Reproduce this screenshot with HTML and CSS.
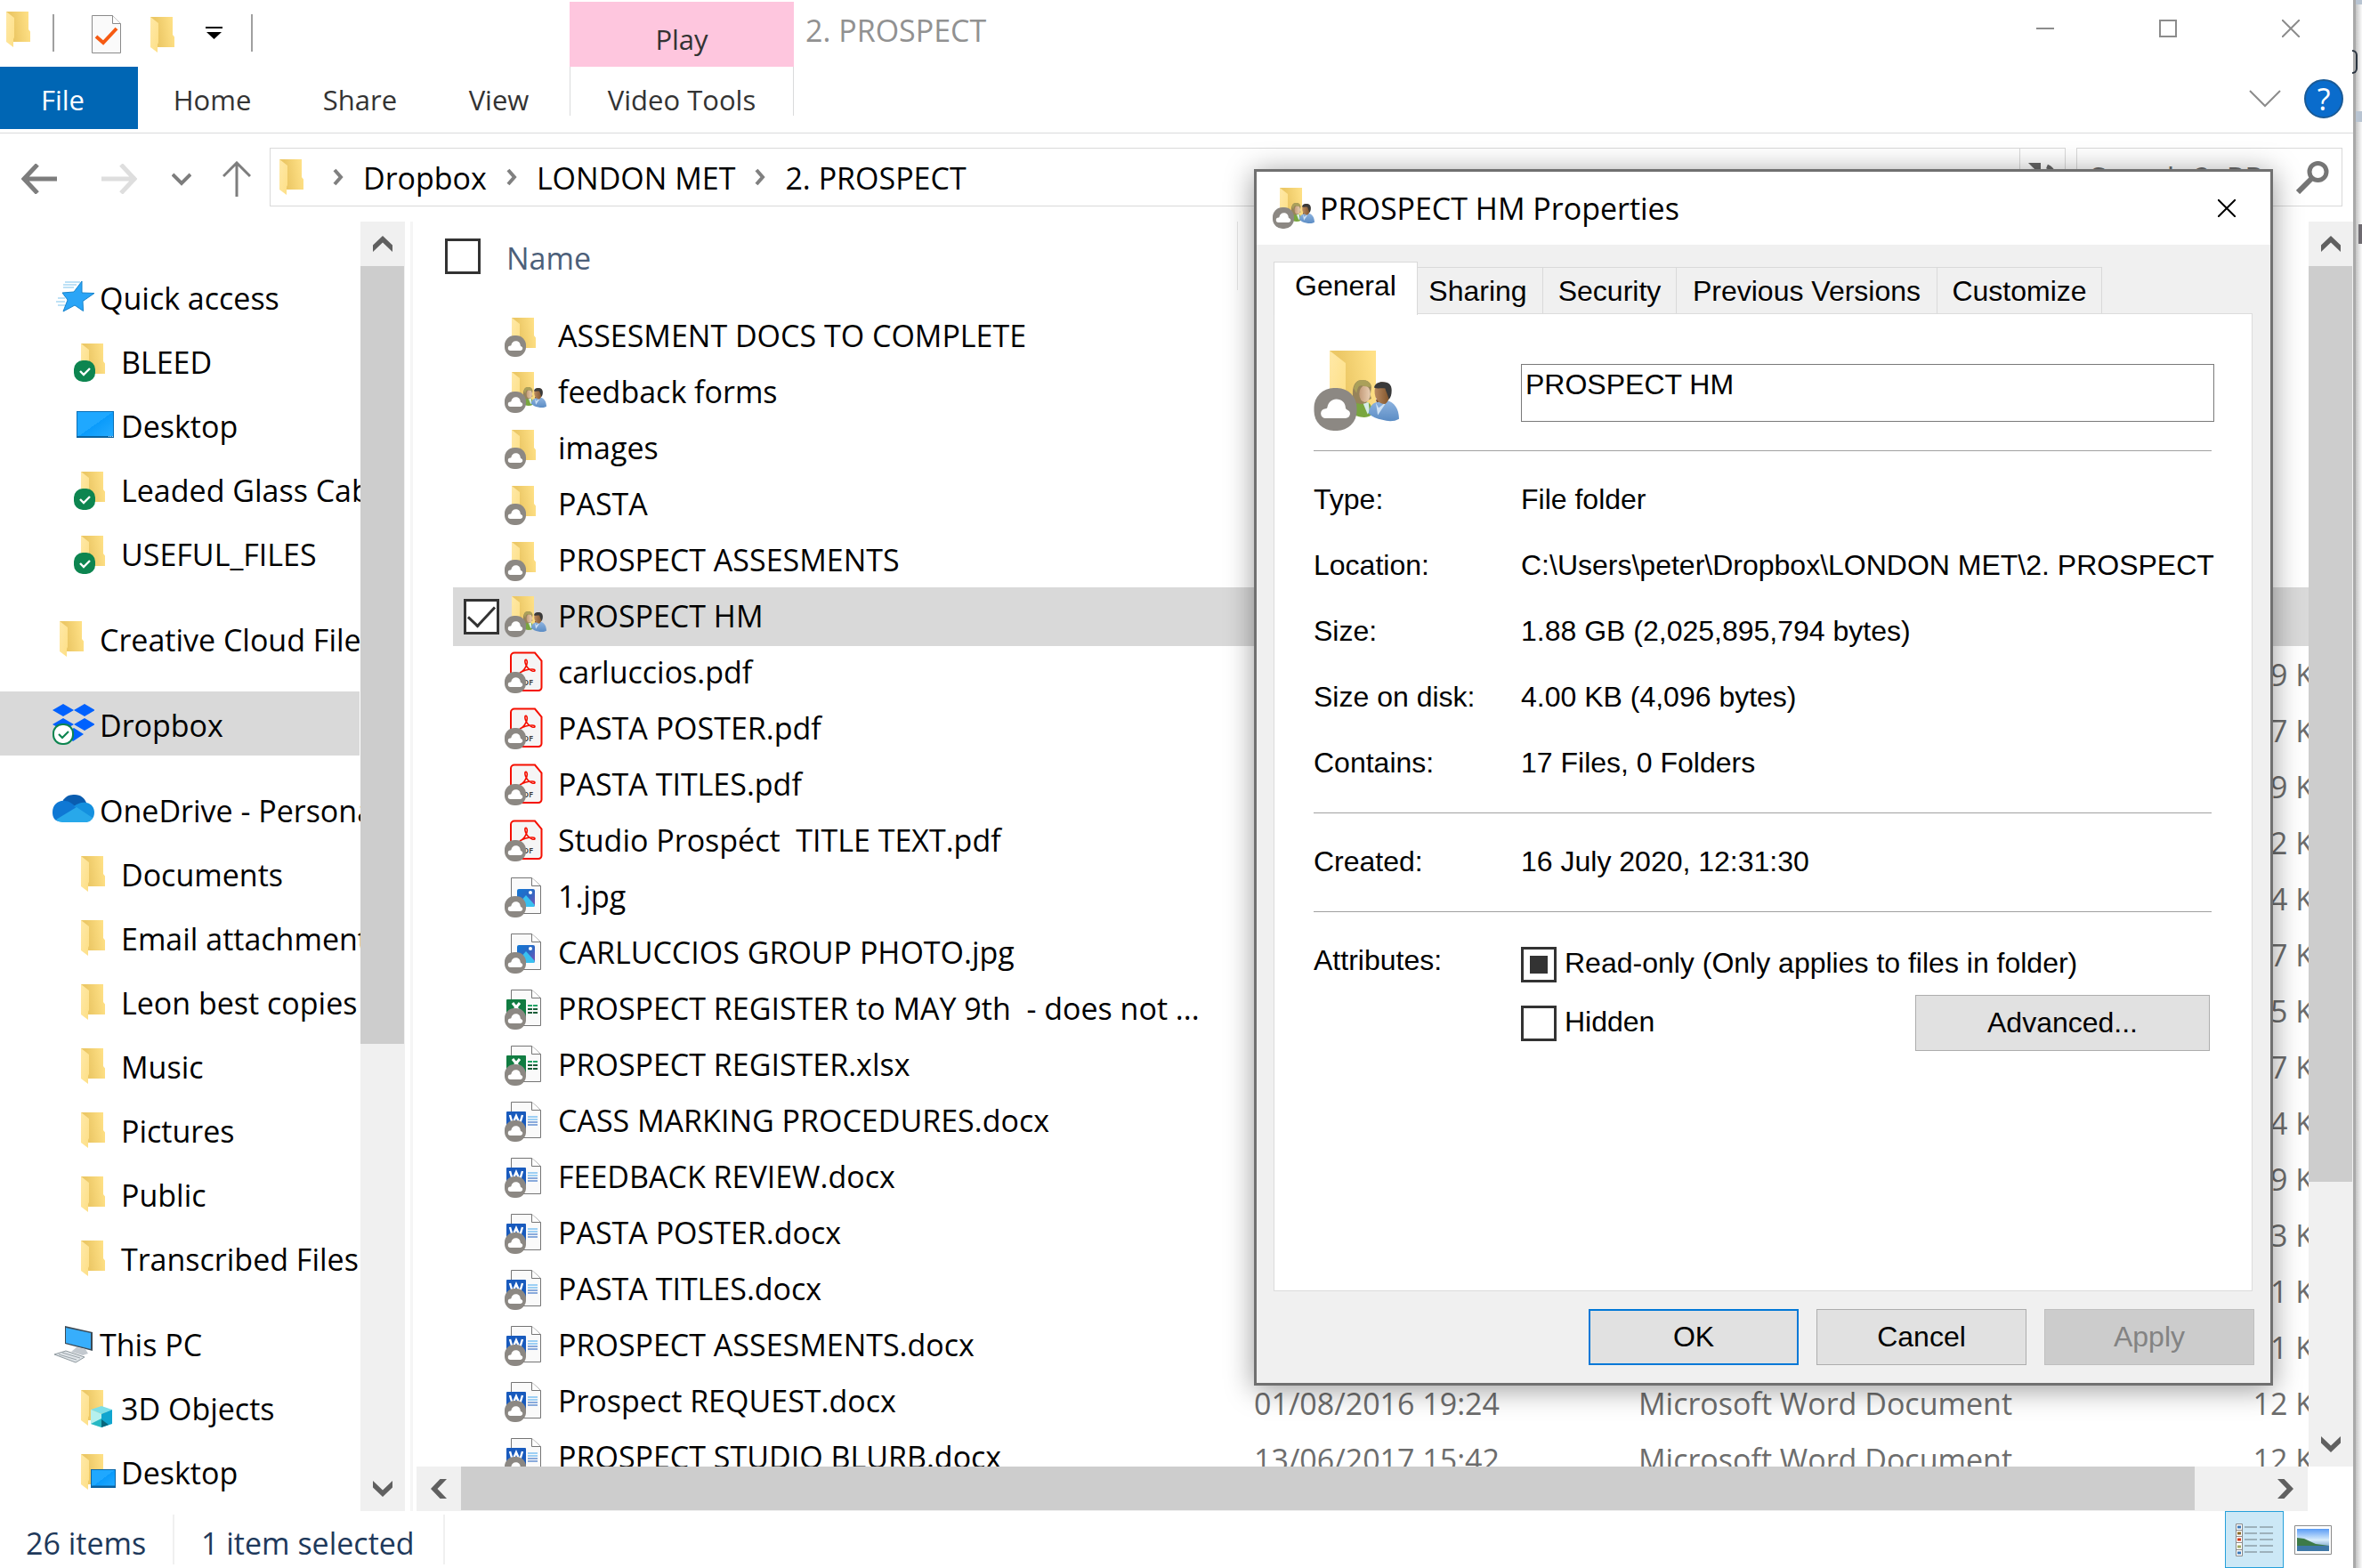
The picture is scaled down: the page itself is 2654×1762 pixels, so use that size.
FILE: index.html
```html
<!DOCTYPE html>
<html lang="en">
<head>
  <meta charset="UTF-8">
  <title>2. PROSPECT</title>
  <link rel="stylesheet" href="styles.css">
</head>
<body>

  <!-- shared icons -->
  <svg class="sprite" aria-hidden="true">
    <defs>
      <linearGradient id="gBack" x1="0" x2="1" y1="0.6" y2="0.4">
        <stop offset="0.3" stop-color="#ecc866"/><stop offset="1" stop-color="#ffe187"/>
      </linearGradient>
      <linearGradient id="gFlap" x1="0" x2="1" y1="0" y2="1">
        <stop offset="0" stop-color="#ffe9a8"/><stop offset="1" stop-color="#fddf86"/>
      </linearGradient>
      <linearGradient id="gScreen" x1="0" x2="1" y1="0" y2="1">
        <stop offset="0" stop-color="#1fa8ff"/><stop offset="0.5" stop-color="#1fa8ff"/>
        <stop offset="0.5" stop-color="#0a9bfb"/><stop offset="1" stop-color="#26abff"/>
      </linearGradient>
      <linearGradient id="gPhoto" x1="0" x2="1" y1="0" y2="1">
        <stop offset="0" stop-color="#1177d4"/><stop offset="0.5" stop-color="#2a68c4"/><stop offset="1" stop-color="#8052b4"/>
      </linearGradient>
      <linearGradient id="gSky" x1="0" x2="0" y1="0" y2="1">
        <stop offset="0" stop-color="#5a9cf5"/><stop offset="0.5" stop-color="#d8ecfb"/><stop offset="1" stop-color="#4a80b0"/>
      </linearGradient>
      <linearGradient id="gBlue" x1="0" x2="0" y1="0" y2="1">
        <stop offset="0" stop-color="#8fb4e0"/><stop offset="1" stop-color="#5b8cc4"/>
      </linearGradient>
      <linearGradient id="gSkin" x1="0" x2="1" y1="0" y2="0">
        <stop offset="0" stop-color="#c39b7a"/><stop offset="1" stop-color="#ead0b4"/>
      </linearGradient>
      <linearGradient id="gBrown" x1="0" x2="1" y1="0" y2="0">
        <stop offset="0" stop-color="#b98a62"/><stop offset="1" stop-color="#7c5026"/>
      </linearGradient>
    </defs>

    <symbol id="folder" viewBox="0 0 28 40">
      <path d="M0 0H25V20L27 22.500V34H8V38L0 33z" fill="url(#gBack)"/>
      <path d="M0 0L9 7V29L8 31V40L0 34z" fill="url(#gFlap)"/>
    </symbol>
    <symbol id="cloud" viewBox="0 0 24 24">
      <rect width="24" height="24" rx="11" fill="#8c8883"/>
      <path d="M6.500 17a2.700 2.700 0 0 1 0-5.400c.6 0 1-.4 1-1C8 8 10 6.200 12.500 6.200c3 0 5.100 2 5.200 4.800 0 .6.400.9.900 1.200 1.200.5 1.800 1.400 1.600 2.600-.2 1.300-1.200 2.200-2.500 2.200z" fill="#fff"/>
    </symbol>
    <symbol id="people" viewBox="0 0 52 46">
      <path d="M4 24l9-1 5 1c4 2 5 6 4 14-4 3-11 3-18 0z" fill="#79a63f"/>
      <path d="M13 25l6-1 1 10-2 3z" fill="#d6ece8"/>
      <path d="M2 18C1 6 5 0 12 0c6 0 10 3 10 8l-1 8 1 4-4 2-2 3C9 27 3 26 2 18z" fill="#97835a"/>
      <ellipse cx="15" cy="15" rx="6" ry="9" fill="url(#gSkin)"/>
      <path d="M3 9C4 3 7 0 12 0c6 0 9 3 10 7-6 1-9-1-11-1-3 0-4 3-5 8z" fill="#aaa05a"/>
      <path d="M27 21l11-1v8l-9 2z" fill="#7a4a22"/>
      <path d="M19 36c1-7 4-11 9-12l11-2c8 2 13 9 13 20-5 3-12 3-18 1-6-1-11-3-15-7z" fill="url(#gBlue)"/>
      <path d="M27 25l3 5 9-7-10 15z" fill="#cfe2f4"/>
      <path d="M26 8c1-4 4-6 8-6 6 0 9 4 9 9s-2 12-6 15c-8 0-13-8-11-18z" fill="url(#gBrown)"/>
      <path d="M25 8c1-4 4-6 9-6 7 0 10 3 10 9 0 5-1 8-3 10-1-5-3-8-4-12-4-1-8 1-12-1z" fill="#3a3a3a"/>
    </symbol>
    <symbol id="folder-cloud" viewBox="0 0 48 48">
      <path d="M9 3H34V23L36 25.500V37H9z" fill="url(#gBack)"/>
      <path d="M9 3L18 10V34L9 37z" fill="url(#gFlap)"/>
      <use href="#cloud" x="1" y="23" width="24" height="24"/>
    </symbol>
    <symbol id="folder-shared" viewBox="0 0 48 48">
      <path d="M9 1H34V22L36 24V34H9z" fill="url(#gBack)"/>
      <path d="M9 1L18 8V34L9 35z" fill="url(#gFlap)"/>
      <use href="#people" x="21" y="18" width="27" height="24"/>
      <use href="#cloud" x="1" y="23" width="24" height="24"/>
    </symbol>
    <symbol id="folder-synced" viewBox="0 0 48 48">
      <path d="M9 5H34V25L36 27.500V39H9z" fill="url(#gBack)"/>
      <path d="M9 5L18 12V34L9 37z" fill="url(#gFlap)"/>
      <rect x="1" y="24" width="24" height="24" rx="10" fill="#0d8550"/>
      <path d="M8 36l4 4 7-7" fill="none" stroke="#fff" stroke-width="2.400"/>
    </symbol>
    <symbol id="folder-plain" viewBox="0 0 48 48">
      <use href="#folder" x="9" y="5" width="28" height="40"/>
    </symbol>
    <symbol id="folder-cube" viewBox="0 0 48 48">
      <use href="#folder" x="9" y="5" width="28" height="40"/>
      <path d="M20 27l12-4 12 4-12 5z" fill="#7ddfe8"/>
      <path d="M20 27l12 5v15l-12-4z" fill="#b5f0ee"/>
      <path d="M20 43l12-6v10z" fill="#27b8c4"/>
      <path d="M44 27l-12 5v15l12-4z" fill="#10a5cf"/>
      <path d="M32 38l8 6-8 3z" fill="#08677c"/>
    </symbol>
    <symbol id="folder-desktop" viewBox="0 0 48 48">
      <use href="#folder" x="9" y="5" width="28" height="40"/>
      <rect x="20.500" y="22.500" width="27" height="20" fill="url(#gScreen)" stroke="#0a66a8"/>
      <path d="M21 41.500h27" stroke="#0c5f9c" stroke-width="2"/>
    </symbol>
    <symbol id="desktop" viewBox="0 0 48 48">
      <rect x="4.500" y="9.500" width="41" height="29" fill="url(#gScreen)" stroke="#0a70b8"/>
      <path d="M4 38h42" stroke="#0b629e" stroke-width="2"/>
      <path d="M40 37.500h5" stroke="#cfeaff" stroke-dasharray="1 1"/>
    </symbol>
    <symbol id="star" viewBox="0 0 48 48">
      <path d="M15 8h17M13 11h15M13 14h12M7 26h8M5 30h10M7 34h8" stroke="#7cc3ec" stroke-width="1"/>
      <path d="M34 7v13l14 .5-13 9 .5 11L26 34l-13 7 5-13-6-8 13-1z" fill="#2aa5f7" stroke="#1784cc"/>
    </symbol>
    <symbol id="dropbox" viewBox="0 0 48 48">
      <path d="M13 2l12 7-12 7L1 9zM37 2l12 7-12 7-12-7zM13 18l12 7-12 7L1 25zM37 18l12 7-12 7-12-7zM25 29l11 7-12 8-10-8z" fill="#0061fe"/>
      <rect x="2" y="25" width="22" height="22" rx="10" fill="#fff" stroke="#0d8550" stroke-width="2"/>
      <path d="M8 36l4 4 7-7" fill="none" stroke="#0d8550" stroke-width="2.200"/>
    </symbol>
    <symbol id="onedrive" viewBox="0 0 48 48">
      <path d="M12 16C16 8 22 8 26 8c7 0 11 4 13 9l-12 8z" fill="#0a5db0"/>
      <path d="M1 28c0-9 7-14 14-13 5 0 8 3 14 8L8 38C3 37 1 33 1 28z" fill="#0f78d4"/>
      <path d="M25 21c4-3 9-5 14-4 6 1 9 6 9 11 0 3-1 6-3 8z" fill="#1490df"/>
      <path d="M5 36l23-14 18 12c-1 3-4 5-8 5H12c-3 0-5-1-7-3z" fill="#28a8ea"/>
    </symbol>
    <symbol id="pc" viewBox="0 0 48 48">
      <path d="M15 5l31 7v21l-31-8z" fill="#3c4a55"/>
      <path d="M16 7l28 6v18L16 24z" fill="#37aefc"/>
      <path d="M28 29l10 2 3 5-6 2-13-4z" fill="#c3c9cf"/>
      <path d="M3 37l13-4 21 7-10 6z" fill="#dfe4e8" stroke="#8f999f"/>
      <path d="M8 37l20 6M12 35l20 6" stroke="#9aa3a9"/>
    </symbol>
    <symbol id="sheet" viewBox="0 0 48 48">
      <path d="M8.500 2.500h23l10 9v31h-33z" fill="#fafafa" stroke="#757575"/>
      <path d="M31.500 2.500v9h10" fill="#fff" stroke="#757575"/>
    </symbol>
    <symbol id="pdf" viewBox="0 0 48 48">
      <path d="M12 1.500h23l7.500 9v30a3.500 3.500 0 0 1-3.500 3.500H12a4 4 0 0 1-4-4V5.500a4 4 0 0 1 4-4z" fill="#f5f5f5" stroke="#f50f00" stroke-width="2"/>
      <path d="M18 24c6-2 10-12 7.500-14.500C22 8 24 19 32 22c4 1 4-2 0-2-5 0-9 1-14 4z" fill="none" stroke="#f50f00" stroke-width="1.600"/>
      <text x="16" y="38" font-family="Open Sans, sans-serif" font-size="9" font-weight="600" fill="#333">PDF</text>
      <use href="#cloud" x="1" y="23" width="24" height="24"/>
    </symbol>
    <symbol id="jpg" viewBox="0 0 48 48">
      <use href="#sheet"/>
      <rect x="15" y="15" width="20" height="20" rx="2" fill="url(#gPhoto)"/>
      <path d="M15 33l10-11 10 11-1 2H16z" fill="#38c0f0"/>
      <circle cx="30" cy="19" r="2" fill="#fff"/>
      <use href="#cloud" x="1" y="23" width="24" height="24"/>
    </symbol>
    <symbol id="xlsx" viewBox="0 0 48 48">
      <use href="#sheet"/>
      <rect x="3" y="13" width="22" height="23" rx="1" fill="#107c41"/>
      <path d="M10 17l8 10M18 17l-8 10" stroke="#fff" stroke-width="3"/>
      <path d="M27 20h5M33 20h5" stroke="#21a366" stroke-width="2"/>
      <path d="M27 24h5M33 24h5M27 28h5M33 28h5" stroke="#185c37" stroke-width="2"/>
      <use href="#cloud" x="1" y="23" width="24" height="24"/>
    </symbol>
    <symbol id="docx" viewBox="0 0 48 48">
      <use href="#sheet"/>
      <rect x="3" y="13" width="22" height="23" rx="1" fill="#185abd"/>
      <path d="M7 17l3 10 4-9 4 9 3-10" fill="none" stroke="#fff" stroke-width="2.400"/>
      <path d="M27 19h11M27 22h11" stroke="#41a5ee"/>
      <path d="M27 25h11M27 28h11" stroke="#185abd"/>
      <use href="#cloud" x="1" y="23" width="24" height="24"/>
    </symbol>
    <symbol id="sb-up" viewBox="0 0 22 18"><path d="M0 10.500L11 0l11 10.500V18L11 7.500 0 18z" fill="#606060"/></symbol>
    <symbol id="sb-down" viewBox="0 0 22 18"><path d="M0 7.500L11 18 22 7.500V0L11 10.500 0 0z" fill="#606060"/></symbol>
    <symbol id="sb-left" viewBox="0 0 18 22"><path d="M10.500 0L0 11l10.500 11H18L7.500 11 18 0z" fill="#606060"/></symbol>
    <symbol id="sb-right" viewBox="0 0 18 22"><path d="M7.500 0L18 11 7.500 22H0l10.500-11L0 0z" fill="#606060"/></symbol>
    <symbol id="crumb" viewBox="0 0 12 20"><path d="M2 2l7 8-7 8" fill="none" stroke="#808080" stroke-width="4"/></symbol>
    <symbol id="close" viewBox="0 0 20 20"><path d="M0 0l20 20M20 0L0 20" fill="none" stroke="currentColor" stroke-width="2"/></symbol>
  </svg>

  <div class="window">

    <header class="titlebar">
      <div class="quickbar">
        <svg class="folder"><use href="#folder"/></svg>
        <span class="bar"></span>
        <button class="plain prop" aria-label="Properties">
          <svg width="33" height="43" viewBox="0 0 33 43">
            <path d="M.5.500h23l9 9v33H.5z" fill="#fafafa" stroke="#8a8a8a"/>
            <path d="M23.500.500v9h9" fill="#fff" stroke="#8a8a8a"/>
            <path d="M5 24l8 7L28 15" fill="none" stroke="#f65a12" stroke-width="4"/>
          </svg>
        </button>
        <button class="plain newfolder" aria-label="New folder"><svg class="folder"><use href="#folder"/></svg></button>
        <button class="plain more" aria-label="Customize Quick Access Toolbar">
          <svg width="19" height="14" viewBox="0 0 19 14"><path d="M0 0h19v2H0zM1 6h17l-8.500 8z" fill="#000"/></svg>
        </button>
        <span class="bar"></span>
      </div>
      <div class="context-tab">Play</div>
      <div class="window-title">2. PROSPECT</div>
      <div class="window-buttons">
        <button class="plain" aria-label="Minimize"><svg width="20" height="20"><path d="M0 10h20" stroke="#8c8c8c" stroke-width="2"/></svg></button>
        <button class="plain" aria-label="Maximize"><svg width="20" height="20"><path d="M1 1h18v18H1z" fill="none" stroke="#8c8c8c" stroke-width="2"/></svg></button>
        <button class="plain" aria-label="Close"><svg width="20" height="20"><use href="#close"/></svg></button>
      </div>
    </header>

    <nav class="ribbon">
      <button class="ribbon-tab file">File</button>
      <button class="ribbon-tab home">Home</button>
      <button class="ribbon-tab share">Share</button>
      <button class="ribbon-tab view">View</button>
      <button class="ribbon-tab video">Video Tools</button>
      <div class="ribbon-end">
        <button class="plain" aria-label="Expand the Ribbon"><svg width="36" height="20"><path d="M1 1l17 17L35 1" fill="none" stroke="#8c8c8c" stroke-width="2"/></svg></button>
        <button class="help" aria-label="Help">?</button>
      </div>
    </nav>

    <div class="navbar">
      <div class="arrows">
        <button class="plain" aria-label="Back"><svg width="40" height="34"><path d="M40 17H4M18 1L3 17l15 16" fill="none" stroke="#7d7d7d" stroke-width="5"/></svg></button>
        <button class="plain fwd" aria-label="Forward"><svg width="40" height="34"><path d="M0 17h36M22 1l15 16-15 16" fill="none" stroke="#dedede" stroke-width="5"/></svg></button>
        <button class="plain recent" aria-label="Recent locations"><svg width="22" height="15"><path d="M1 2l10 10L21 2" fill="none" stroke="#7d7d7d" stroke-width="4"/></svg></button>
        <button class="plain up" aria-label="Up"><svg width="32" height="40"><path d="M16 40V3M1 17L16 2l15 15" fill="none" stroke="#7d7d7d" stroke-width="3"/></svg></button>
      </div>
      <div class="address">
        <svg class="folder"><use href="#folder"/></svg>
        <svg class="crumb"><use href="#crumb"/></svg>
        <a href="#">Dropbox</a>
        <svg class="crumb"><use href="#crumb"/></svg>
        <a href="#">LONDON MET</a>
        <svg class="crumb"><use href="#crumb"/></svg>
        <a href="#">2. PROSPECT</a>
        <div class="address-end">
          <button class="plain drop" aria-label="Previous locations"><svg width="26" height="15"><path d="M1 1l12 12L25 1" fill="none" stroke="#606060" stroke-width="3"/></svg></button>
          <button class="plain refresh" aria-label="Refresh"><svg width="32" height="32" viewBox="0 0 32 32"><path d="M6 8a13 13 0 1 0 15-4" fill="none" stroke="#666" stroke-width="5"/><path d="M0 0h14v14z" fill="#666"/></svg></button>
        </div>
      </div>
      <div class="search">
        <input type="search" placeholder="Search 2. PR..." aria-label="Search 2. PROSPECT">
        <svg width="37" height="37" viewBox="0 0 37 37"><circle cx="24.500" cy="12" r="9.500" fill="none" stroke="#757575" stroke-width="5"/><path d="M18 19L2 35" stroke="#757575" stroke-width="6"/></svg>
      </div>
    </div>

    <div class="panes">
      <aside class="sidebar">
        <ul class="tree">
          <li><svg><use href="#star"/></svg><a href="#">Quick access</a></li>
          <li class="sub"><svg><use href="#folder-synced"/></svg><a href="#">BLEED</a></li>
          <li class="sub"><svg><use href="#desktop"/></svg><a href="#">Desktop</a></li>
          <li class="sub"><svg><use href="#folder-synced"/></svg><a href="#">Leaded Glass Cabinets</a></li>
          <li class="sub"><svg><use href="#folder-synced"/></svg><a href="#">USEFUL_FILES</a></li>
          <li class="group"><svg><use href="#folder-plain"/></svg><a href="#">Creative Cloud Files</a></li>
          <li class="group current"><svg><use href="#dropbox"/></svg><a href="#">Dropbox</a></li>
          <li class="group"><svg><use href="#onedrive"/></svg><a href="#">OneDrive - Personal</a></li>
          <li class="sub"><svg><use href="#folder-plain"/></svg><a href="#">Documents</a></li>
          <li class="sub"><svg><use href="#folder-plain"/></svg><a href="#">Email attachments</a></li>
          <li class="sub"><svg><use href="#folder-plain"/></svg><a href="#">Leon best copies</a></li>
          <li class="sub"><svg><use href="#folder-plain"/></svg><a href="#">Music</a></li>
          <li class="sub"><svg><use href="#folder-plain"/></svg><a href="#">Pictures</a></li>
          <li class="sub"><svg><use href="#folder-plain"/></svg><a href="#">Public</a></li>
          <li class="sub"><svg><use href="#folder-plain"/></svg><a href="#">Transcribed Files</a></li>
          <li class="group"><svg><use href="#pc"/></svg><a href="#">This PC</a></li>
          <li class="sub"><svg><use href="#folder-cube"/></svg><a href="#">3D Objects</a></li>
          <li class="sub"><svg><use href="#folder-desktop"/></svg><a href="#">Desktop</a></li>
        </ul>
        <div class="vscroll">
          <svg class="v-arrow"><use href="#sb-up"/></svg>
          <div class="track"><div class="thumb side-thumb"></div></div>
          <svg class="v-arrow"><use href="#sb-down"/></svg>
        </div>
      </aside>

      <main class="content">
        <div class="list-area">
          <div class="list">
            <table class="files">
              <colgroup><col class="c-name"><col class="c-date"><col class="c-type"><col class="c-size"></colgroup>
              <thead>
                <tr>
                  <th><div class="head"><input type="checkbox" class="check" aria-label="Select all"><span>Name</span></div></th>
                  <th></th><th></th><th></th>
                </tr>
              </thead>
              <tbody>
                <tr><td><div class="name"><svg><use href="#folder-cloud"/></svg>ASSESMENT DOCS TO COMPLETE</div></td><td></td><td></td><td></td></tr>
                <tr><td><div class="name"><svg><use href="#folder-shared"/></svg>feedback forms</div></td><td></td><td></td><td></td></tr>
                <tr><td><div class="name"><svg><use href="#folder-cloud"/></svg>images</div></td><td></td><td></td><td></td></tr>
                <tr><td><div class="name"><svg><use href="#folder-cloud"/></svg>PASTA</div></td><td></td><td></td><td></td></tr>
                <tr><td><div class="name"><svg><use href="#folder-cloud"/></svg>PROSPECT ASSESMENTS</div></td><td></td><td></td><td></td></tr>
                <tr class="selected"><td><div class="name"><input type="checkbox" class="check" checked aria-label="PROSPECT HM"><svg><use href="#folder-shared"/></svg>PROSPECT HM</div></td><td></td><td></td><td></td></tr>
                <tr><td><div class="name"><svg><use href="#pdf"/></svg>carluccios.pdf</div></td><td></td><td></td><td>9 KB</td></tr>
                <tr><td><div class="name"><svg><use href="#pdf"/></svg>PASTA POSTER.pdf</div></td><td></td><td></td><td>7 KB</td></tr>
                <tr><td><div class="name"><svg><use href="#pdf"/></svg>PASTA TITLES.pdf</div></td><td></td><td></td><td>9 KB</td></tr>
                <tr><td><div class="name"><svg><use href="#pdf"/></svg>Studio Prospéct&nbsp; TITLE TEXT.pdf</div></td><td></td><td></td><td>2 KB</td></tr>
                <tr><td><div class="name"><svg><use href="#jpg"/></svg>1.jpg</div></td><td></td><td></td><td>4 KB</td></tr>
                <tr><td><div class="name"><svg><use href="#jpg"/></svg>CARLUCCIOS GROUP PHOTO.jpg</div></td><td></td><td></td><td>7 KB</td></tr>
                <tr><td><div class="name"><svg><use href="#xlsx"/></svg>PROSPECT REGISTER to MAY 9th&nbsp; - does not ...</div></td><td></td><td></td><td>5 KB</td></tr>
                <tr><td><div class="name"><svg><use href="#xlsx"/></svg>PROSPECT REGISTER.xlsx</div></td><td></td><td></td><td>7 KB</td></tr>
                <tr><td><div class="name"><svg><use href="#docx"/></svg>CASS MARKING PROCEDURES.docx</div></td><td></td><td></td><td>4 KB</td></tr>
                <tr><td><div class="name"><svg><use href="#docx"/></svg>FEEDBACK REVIEW.docx</div></td><td></td><td></td><td>9 KB</td></tr>
                <tr><td><div class="name"><svg><use href="#docx"/></svg>PASTA POSTER.docx</div></td><td></td><td></td><td>3 KB</td></tr>
                <tr><td><div class="name"><svg><use href="#docx"/></svg>PASTA TITLES.docx</div></td><td></td><td></td><td>1 KB</td></tr>
                <tr><td><div class="name"><svg><use href="#docx"/></svg>PROSPECT ASSESMENTS.docx</div></td><td></td><td></td><td>1 KB</td></tr>
                <tr><td><div class="name"><svg><use href="#docx"/></svg>Prospect REQUEST.docx</div></td><td>01/08/2016 19:24</td><td>Microsoft Word Document</td><td>12 KB</td></tr>
                <tr><td><div class="name"><svg><use href="#docx"/></svg>PROSPECT STUDIO BLURB.docx</div></td><td>13/06/2017 15:42</td><td>Microsoft Word Document</td><td>12 KB</td></tr>
              </tbody>
            </table>
          </div>
          <div class="vscroll">
            <svg class="v-arrow"><use href="#sb-up"/></svg>
            <div class="track"><div class="thumb main-thumb"></div></div>
            <svg class="v-arrow"><use href="#sb-down"/></svg>
          </div>
        </div>
        <div class="hscroll">
          <svg class="h-arrow"><use href="#sb-left"/></svg>
          <div class="track"><div class="thumb wide-thumb"></div></div>
          <svg class="h-arrow"><use href="#sb-right"/></svg>
        </div>
      </main>
    </div>

    <footer class="status">
      <span class="count">26 items</span>
      <span class="chosen">1 item selected</span>
      <div class="views">
        <button class="view-btn on" aria-label="Details">
          <svg width="42" height="37" viewBox="0 0 42 37">
            <path d="M.5.500h7v36h-7zM.5 7.500h7M.5 14.500h7M.5 21.500h7M.5 29.500h7" fill="#fff" stroke="#8a8a8a"/>
            <path d="M2 4h4" stroke="#3a78b8" stroke-width="3"/><path d="M2 11h4" stroke="#8a6a28" stroke-width="3"/>
            <path d="M2 18h4" stroke="#d03818" stroke-width="3"/><path d="M2 26h4" stroke="#a0a860" stroke-width="3"/><path d="M2 33h4" stroke="#3a78b8" stroke-width="3"/>
            <path d="M10 4h14M27 4h15M10 11h14M27 11h15M10 18h14M27 18h15M10 25h14M27 25h15M10 32h14M27 32h15" stroke="#6f7b80"/>
          </svg>
        </button>
        <button class="view-btn" aria-label="Large icons">
          <svg width="42" height="33" viewBox="0 0 42 33">
            <path d="M.5.500h41v32H.5z" fill="#fff" stroke="#8a8a8a"/>
            <path d="M3 4h36v25H3z" fill="url(#gSky)"/>
            <path d="M3 14l8 1 13 6 15 2H3z" fill="#3d7a48"/>
            <path d="M3 23h36v6H3z" fill="#3f78a8"/>
          </svg>
        </button>
      </div>
    </footer>
  </div>

  <!-- sliver of the page behind the window -->
  <div class="behind"><span class="patch"></span><span class="curve"></span><span class="patch low"></span><span class="mark"></span></div>

  <section class="dialog" role="dialog" aria-labelledby="dlg-title">
    <header class="dialog-title">
      <svg class="small-icon"><use href="#folder-shared"/></svg>
      <h1 id="dlg-title">PROSPECT HM Properties</h1>
      <button class="plain dialog-close" aria-label="Close"><svg width="20" height="20"><use href="#close"/></svg></button>
    </header>

    <div class="tabs" role="tablist">
      <button class="tab active" role="tab">General</button>
      <button class="tab sharing" role="tab">Sharing</button>
      <button class="tab security" role="tab">Security</button>
      <button class="tab versions" role="tab">Previous Versions</button>
      <button class="tab customize" role="tab">Customize</button>
    </div>

    <div class="panel">
      <div class="identity">
        <svg class="big-icon" viewBox="0 0 96 92">
          <path d="M18 1H70V70H18z" fill="url(#gBack)"/>
          <path d="M18 1L36 15V60H18z" fill="url(#gFlap)"/>
          <use href="#people" x="42" y="34" width="54" height="48"/>
          <use href="#cloud" x="0" y="43" width="49" height="48"/>
        </svg>
        <input type="text" class="folder-name" value="PROSPECT HM" aria-label="Folder name">
      </div>

      <dl class="facts">
        <dt>Type:</dt><dd>File folder</dd>
        <dt>Location:</dt><dd>C:\Users\peter\Dropbox\LONDON MET\2. PROSPECT</dd>
        <dt>Size:</dt><dd>1.88 GB (2,025,895,794 bytes)</dd>
        <dt>Size on disk:</dt><dd>4.00 KB (4,096 bytes)</dd>
        <dt>Contains:</dt><dd>17 Files, 0 Folders</dd>
      </dl>
      <dl class="facts">
        <dt>Created:</dt><dd>16 July 2020, 12:31:30</dd>
      </dl>
      <div class="facts attributes">
        <span class="attr-label">Attributes:</span>
        <div class="attr-list">
          <label><input type="checkbox" class="check mixed">Read-only (Only applies to files in folder)</label>
          <div class="attr-row">
            <label><input type="checkbox" class="check">Hidden</label>
            <button class="btn advanced">Advanced...</button>
          </div>
        </div>
      </div>
    </div>

    <div class="dialog-buttons">
      <button class="btn default">OK</button>
      <button class="btn">Cancel</button>
      <button class="btn" disabled>Apply</button>
    </div>
  </section>

</body>
</html>
```
FILE: styles.css
```css
* { box-sizing: border-box; }

body {
  margin: 0;
  height: 100vh;
  display: flex;
  position: relative;
  overflow: hidden;
  background: #fff;
  color: #000;
  font-family: "Open Sans", "Noto Sans", sans-serif;
  font-size: 34px;
  line-height: 48px;
}
button, input { font: inherit; color: inherit; }
button { padding: 0; border: 0; background: none; }
a { color: inherit; text-decoration: none; }
svg { display: block; flex: none; }
ul, dl, dd, h1 { margin: 0; padding: 0; }
.sprite { position: absolute; width: 0; height: 0; }
.plain { display: flex; align-items: center; justify-content: center; }
.folder { width: 28px; height: 40px; }

.window {
  flex: 1;
  min-width: 0;
  display: flex;
  flex-direction: column;
  border-right: 3px solid #a9a9a9;
}

/* title bar */
.titlebar { display: flex; height: 75px; }
.quickbar {
  width: 640px;
  padding: 13px 0 0 7px;
  display: flex;
  align-items: flex-start;
}
.bar { width: 2px; height: 42px; margin: 3px 0 0 24px; background: #a0a0a0; }
.prop { margin: 4px 0 0 42px; }
.newfolder { margin: 6px 0 0 33px; }
.more { margin: 17px 8px 0 34px; }
.context-tab {
  width: 252px;
  margin-top: 2px;
  padding-top: 18px;
  text-align: center;
  background: #fec6de;
  color: #333;
  font-size: 31px;
}
.window-title { padding: 10px 0 0 13px; color: #919191; }
.window-buttons {
  margin-left: auto;
  padding: 22px 60px 0 0;
  display: flex;
  align-items: flex-start;
  gap: 118px;
  color: #8c8c8c;
}

/* ribbon */
.ribbon { display: flex; height: 75px; border-bottom: 1px solid #dadbdc; font-size: 31px; }
.ribbon-tab { height: 70px; padding-top: 4px; color: #333; }
.file { width: 155px; padding-right: 14px; background: #0066b4; color: #fff; }
.home { width: 167px; }
.share { width: 165px; }
.view { width: 153px; padding-right: 6px; }
.video { width: 252px; height: 55px; padding-top: 13px; border: solid #dadbdc; border-width: 0 1px; }
.ribbon-end {
  margin-left: auto;
  padding: 14px 11px 0 0;
  display: flex;
  align-items: flex-start;
  gap: 26px;
}
.ribbon-end .plain { height: 44px; }
.help {
  width: 44px;
  height: 44px;
  line-height: 40px;
  border: 2px solid #1a5a96;
  border-radius: 50%;
  background: #0a6ccc;
  color: #fff;
  font-size: 34px;
}

/* address row */
.navbar { display: flex; height: 99px; padding: 16px 12px 17px 0; }
.arrows { width: 303px; padding-left: 24px; display: flex; align-items: center; margin-top: 4px; }
.fwd { margin-left: 50px; }
.recent { margin-left: 39px; }
.up { margin-left: 35px; }
.address {
  flex: 1;
  display: flex;
  align-items: center;
  padding-left: 10px;
  border: 1px solid #d9d9d9;
}
.address a { margin: 0 22px; padding-top: 2px; }
.crumb { width: 12px; height: 20px; }
.address .folder + .crumb { margin-left: 32px; }
.address-end { margin-left: auto; height: 100%; display: flex; }
.drop { width: 50px; }
.refresh { width: 51px; border-left: 1px solid #d9d9d9; }
.search {
  width: 299px;
  margin-left: 12px;
  padding: 0 14px 0 14px;
  display: flex;
  align-items: center;
  border: 1px solid #d9d9d9;
}
.search input {
  flex: 1;
  min-width: 0;
  padding: 2px 0 0;
  border: 0;
  outline: 0;
  background: none;
}
.search input::placeholder { color: #6d6d6d; opacity: 1; }
.search svg { margin-left: 4px; }

/* navigation tree */
.panes { flex: 1; min-height: 0; display: flex; }
.sidebar { width: 464px; display: flex; border-right: 3px solid #f5f5f5; }
.sidebar .vscroll { margin-right: 6px; }
.tree { flex: 1; min-width: 0; padding-top: 48px; list-style: none; overflow: hidden; }
.tree li {
  height: 72px;
  padding-left: 58px;
  display: flex;
  align-items: center;
  gap: 6px;
  white-space: nowrap;
}
.tree svg { width: 48px; height: 48px; overflow: visible; }
.tree a { padding-top: 4px; }
.tree .sub { padding-left: 82px; }
.tree .group { margin-top: 24px; }
.tree .current { background: #d9d9d9; margin-right: 1px; }

/* scroll bars */
.vscroll { width: 50px; display: flex; flex-direction: column; align-items: center; background: #f0f0f0; }
.v-arrow { width: 22px; height: 18px; margin: 16px 0; }
.vscroll .track { flex: 1; width: 100%; padding-right: 1px; }
.thumb { background: #cdcdcd; }
.side-thumb { height: 64.8%; }
.main-thumb { height: 79.2%; }
.hscroll { height: 50px; margin: 0 51px 0 4px; display: flex; align-items: center; background: #f0f0f0; }
.hscroll .track { flex: 1; height: 100%; padding-bottom: 1px; }
.h-arrow { width: 18px; height: 22px; margin: 0 16px; }
.wide-thumb { width: 96.2%; height: 100%; }

/* file list */
.content { flex: 1; min-width: 0; display: flex; flex-direction: column; }
.list-area { flex: 1; min-height: 0; display: flex; }
.list { flex: 1; min-width: 0; overflow: hidden; padding-left: 45px; }
.files {
  width: calc(100% + 28px);
  table-layout: fixed;
  border-collapse: collapse;
  white-space: nowrap;
}
.c-name { width: 900px; }
.c-date { width: 432px; }
.c-size { width: 200px; }
.files th { height: 97px; padding: 0; vertical-align: top; font-weight: normal; text-align: left; }
.files td { height: 63px; padding: 4px 0 0; color: #6d6d6d; }
.files td:first-child { padding: 0; color: #000; }
.files td:last-child { text-align: right; }
.head {
  width: 891px;
  height: 77px;
  margin-left: -9px;
  display: flex;
  align-items: center;
  gap: 29px;
  border-right: 1px solid #e5e5e5;
  color: #4c607a;
}
.head span { padding-top: 4px; }
.name { height: 63px; padding-left: 57px; display: flex; align-items: center; line-height: 75px; }
.name svg { width: 48px; height: 48px; margin-right: 13px; }
.selected { background: #d9d9d9; box-shadow: 0 -1px 0 #d9d9d9, 0 2px 0 #d9d9d9; }
.selected .name { padding-left: 12px; }
.selected .check { margin-right: 5px; }

.check {
  appearance: none;
  flex: none;
  width: 40px;
  height: 40px;
  margin: 0;
  border: 3px solid #333;
  background: #fff;
  display: grid;
  place-items: center;
}
.check:checked::before {
  content: "";
  width: 27px;
  height: 13px;
  margin-bottom: 8px;
  border: solid #333;
  border-width: 0 0 3px 3px;
  transform: rotate(-47deg);
}
.mixed::before { content: ""; width: 20px; height: 20px; background: #333; }

/* status bar */
.status { height: 64px; display: flex; align-items: center; color: #1e395b; }
.status span { padding-top: 8px; box-shadow: 2px 0 0 #f0f0f0; }
.count { width: 194px; padding-left: 29px; }
.chosen { padding: 0 32px; }
.views { margin-left: auto; height: 64px; padding-right: 12px; display: flex; }
.view-btn { width: 66px; display: flex; align-items: center; justify-content: center; border: 1px solid transparent; }
.view-btn.on { background: #cce8f6; border-color: #26a0da; }

.behind { width: 7px; position: relative; background: linear-gradient(90deg, #c4c4c4, #fbfbfb); }
.patch { position: absolute; top: 0; width: 7px; height: 5px; background: #b8c4d2; }
.patch.low { top: 125px; height: 12px; }
.curve {
  position: absolute;
  top: 56px;
  right: 5px;
  width: 6px;
  height: 27px;
  border: 2px solid #2a3440;
  border-left: 0;
  border-radius: 0 6px 6px 0;
}
.mark { position: absolute; top: 252px; right: 0; width: 4px; height: 22px; background: #6e6a70; }

/* properties window */
.dialog {
  position: absolute;
  top: 190px;
  right: 100px;
  width: 1145px;
  border: 3px solid #707070;
  background: #f0f0f0;
  box-shadow: 0 4px 30px rgba(0, 0, 0, 0.4);
  font-family: "Liberation Sans", Arial, sans-serif;
  font-size: 32px;
  line-height: 38px;
}
.dialog-title { height: 82px; padding: 0 39px 0 17px; display: flex; align-items: center; background: #fff; }
.small-icon { width: 48px; height: 48px; }
.dialog-title h1 {
  padding: 0 0 0 6px;
  font-family: "Open Sans", "Noto Sans", sans-serif;
  font-size: 34px;
  font-weight: normal;
}
.dialog-close { margin-left: auto; }

.tabs { height: 77px; padding: 25px 0 0 19px; display: flex; }
.tab { height: 52px; border: 1px solid #d9d9d9; border-width: 1px 1px 0 0; background: #f0f0f0; }
.tab.active {
  width: 162px;
  height: 60px;
  margin-top: -6px;
  padding-bottom: 7px;
  border-left-width: 1px;
  background: #fff;
  position: relative;
}
.sharing { width: 141px; padding-right: 5px; }
.security { width: 150px; }
.versions { width: 293px; }
.customize { width: 185px; }

.panel {
  height: 1099px;
  margin: 0 20px 0 19px;
  padding: 40px 45px 0 44px;
  border: 1px solid #dcdcdc;
  background: #fff;
}
.identity { height: 113px; display: flex; align-items: flex-start; }
.big-icon { width: 96px; height: 92px; margin-right: 137px; }
.folder-name {
  flex: 1;
  height: 65px;
  margin: 16px -3px 0 0;
  padding: 0 4px 19px;
  border: 1px solid #7a7a7a;
  background: #fff;
}
.facts {
  padding: 17px 0 19px;
  display: grid;
  grid-template-columns: 233px 1fr;
  grid-auto-rows: 74px;
  align-items: center;
  border-top: 1px solid #a0a0a0;
  white-space: nowrap;
}
.attributes { grid-auto-rows: auto; align-items: start; }
.attr-label { line-height: 74px; }
.attr-list { display: flex; flex-direction: column; gap: 14px; padding-top: 22px; }
.attr-list label { display: flex; gap: 9px; line-height: 36px; }
.attr-row { display: flex; justify-content: space-between; align-items: center; }

.dialog-buttons { padding: 20px 18px; display: flex; justify-content: flex-end; gap: 20px; }
.btn { width: 236px; height: 63px; padding-bottom: 2px; border: 1px solid #adadad; background: #e1e1e1; }
.btn.default { border: 2px solid #0078d7; }
.btn:disabled { background: #ccc; border-color: #bfbfbf; color: #838383; }
.advanced { width: 331px; margin-right: 2px; }
```
